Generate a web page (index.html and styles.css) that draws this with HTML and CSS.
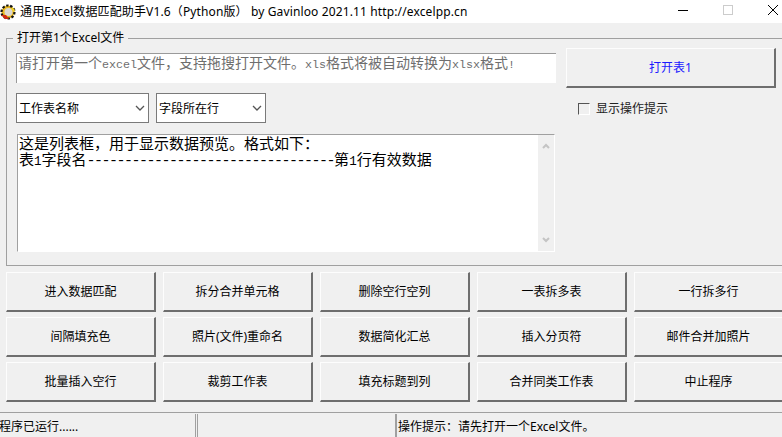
FILE: index.html
```html
<!DOCTYPE html>
<html lang="zh-CN">
<head>
<meta charset="utf-8">
<title>通用Excel数据匹配助手</title>
<link rel="stylesheet" href="styles.css">
</head>
<body>
<div class="window">
  <header class="titlebar">
    <svg class="app-icon" width="16" height="16" viewBox="0 0 16 16">
      <circle cx="8" cy="8" r="6.5" fill="#e8b820"/>
      <circle cx="8" cy="8" r="6.5" fill="none" stroke="#141414" stroke-width="2.2" stroke-dasharray="2.4 1.6"/>
      <circle cx="8.5" cy="8" r="4" fill="#dcd8d0"/>
      <path d="M1 11l4 4 4 0-3-4z" fill="#d02810"/>
      <path d="M12 3l3 3-1 2-3-3z" fill="#f0d020"/>
    </svg>
    <span class="title-text">通用Excel数据匹配助手V1.6（Python版） by Gavinloo 2021.11 http://excelpp.cn</span>
    <div class="win-controls">
      <svg width="12" height="12" viewBox="0 0 12 12"><path d="M1 6.5h10" stroke="#000"/></svg>
      <svg width="12" height="12" viewBox="0 0 12 12"><rect x="1.5" y="1.5" width="9" height="9" fill="none" stroke="#ccc"/></svg>
      <svg width="12" height="12" viewBox="0 0 12 12"><path d="M1 1l10 10M11 1L1 11" stroke="#000"/></svg>
    </div>
  </header>

  <fieldset class="group">
    <legend>打开第1个Excel文件</legend>
    <div class="group-grid">
      <div class="left-col">
        <div class="prompt">请打开第一个<span class="half">excel</span>文件，支持拖搜打开文件。<span class="half">xls</span>格式将被自动转换为<span class="half">xlsx</span>格式<span class="half">!</span></div>
        <div class="selects">
          <div class="combo combo-wide">工作表名称<svg class="chev" width="10" height="6" viewBox="0 0 10 6"><path d="M1 1l4 4 4-4" fill="none" stroke="#555" stroke-width="1.3"/></svg></div>
          <div class="combo combo-narrow">字段所在行<svg class="chev" width="10" height="6" viewBox="0 0 10 6"><path d="M1 1l4 4 4-4" fill="none" stroke="#555" stroke-width="1.3"/></svg></div>
        </div>
        <div class="listbox">
          <div class="list-text">
            <div class="list-line">这是列表框，用于显示数据预览。格式如下：</div>
            <div class="list-line">表<span class="half-l">1</span>字段名<span class="dash">---------------------------------</span>第<span class="half-l">1</span>行有效数据</div>
          </div>
          <div class="scroll">
            <svg width="8" height="6" viewBox="0 0 8 6"><path d="M1 5l3-3 3 3" fill="none" stroke="#c4c4c4" stroke-width="2"/></svg>
            <svg width="8" height="6" viewBox="0 0 8 6"><path d="M1 1l3 3 3-3" fill="none" stroke="#c4c4c4" stroke-width="2"/></svg>
          </div>
        </div>
      </div>
      <div class="right-col">
        <div class="btn btn-open">打开表1</div>
        <label class="check"><span class="box"></span>显示操作提示</label>
      </div>
    </div>
  </fieldset>

  <div class="buttons">
    <div class="btn">进入数据匹配</div>
    <div class="btn">拆分合并单元格</div>
    <div class="btn">删除空行空列</div>
    <div class="btn">一表拆多表</div>
    <div class="btn">一行拆多行</div>
    <div class="btn">间隔填充色</div>
    <div class="btn">照片(文件)重命名</div>
    <div class="btn">数据简化汇总</div>
    <div class="btn">插入分页符</div>
    <div class="btn">邮件合并加照片</div>
    <div class="btn">批量插入空行</div>
    <div class="btn">裁剪工作表</div>
    <div class="btn">填充标题到列</div>
    <div class="btn">合并同类工作表</div>
    <div class="btn">中止程序</div>
  </div>

  <footer class="status">
    <div class="cell cell-a"><span class="clip">程序已运行......</span></div>
    <div class="cell cell-b"></div>
    <div class="cell cell-c">操作提示：请先打开一个Excel文件。</div>
  </footer>
</div>
</body>
</html>
```
FILE: styles.css
```css
* { box-sizing: border-box; }
html, body { margin: 0; height: 100%; overflow: hidden; }
body { background: #f0f0f0; font: 12px/16px "Noto Sans", "Noto Sans CJK SC", sans-serif; color: #000; }
.window { width: 782px; height: 437px; overflow: hidden; display: flex; flex-direction: column; }

.titlebar { height: 23px; flex: none; background: #fff; display: flex; align-items: center; white-space: pre; }
.app-icon { flex: none; margin-right: 4px; }
.title-text { flex: 1; font-size: 12px; letter-spacing: 0.13px; }
.win-controls { display: flex; gap: 33px; margin-right: 3px; padding-bottom: 3px; }

.group { margin: 7px -10px 0 6px; padding: 0 0 0 9px; height: 236px; flex: none; border: 0; border-top: 1px solid #a0a0a0; border-left: 1px solid #a0a0a0; border-bottom: 1px solid #a0a0a0; min-width: 0; }
.group legend { padding: 0 4px; margin-left: -3px; line-height: 16px; }
.group-grid { display: flex; margin-top: 7px; }
.left-col { width: 540px; flex: none; display: flex; flex-direction: column; }
.right-col { margin-left: 10px; width: 210px; flex: none; margin-top: -5px; }

.prompt { height: 30px; background: #fff; border-top: 1px solid #9a9a9a; border-left: 1px solid #9a9a9a; padding: 0 0 0 1px; font: 14px/17px "Noto Sans CJK SC", sans-serif; color: #6e6e6e; white-space: pre; overflow: hidden; }
.half { font: 11.67px/1 "Liberation Mono", monospace; }
.selects { display: flex; gap: 7px; margin-top: 10px; }
.combo { height: 30px; background: #fff; border: 1px solid #7a7a7a; padding-left: 2px; display: flex; align-items: center; justify-content: space-between; padding-right: 3px; font: 12px/16px "Noto Sans CJK SC", sans-serif; }
.combo-wide { width: 133px; }
.combo-narrow { width: 110px; }
.listbox { margin: 11px 0 0 1px; height: 118px; width: 538px; display: flex; background: #fff; border-top: 1px solid #a0a0a0; border-left: 1px solid #a0a0a0; border-right: 1px solid #fff; border-bottom: 1px solid #fff; }
.list-text { flex: 1; padding-left: 1px; font: 15px/16px "Noto Sans CJK SC", sans-serif; }
.list-line { white-space: pre; height: 16px; }
.half-l { font: 12.5px/1 "Liberation Mono", monospace; }
.dash { font: 15px/1 "Liberation Mono", monospace; letter-spacing: -1.5px; }
.scroll { width: 16px; background: #f0f0f0; display: flex; flex-direction: column; justify-content: space-between; align-items: center; padding: 8px 0; }

.btn { height: 40px; display: flex; align-items: center; justify-content: center; background: #f0f0f0; border-style: solid; border-width: 1px 2px 2px 1px; border-color: #fdfdfd #6e6e6e #6e6e6e #fdfdfd; }
.btn-open { height: 40px; color: #1a1aff; }
.check { display: flex; align-items: center; margin: 13px 0 0 12px; color: #222; }
.box { width: 12px; height: 12px; background: #f0f0f0; border: 1px solid; border-color: #555 #fff #fff #555; margin-right: 6px; }

.buttons { display: grid; grid-template-columns: repeat(5, 150px); column-gap: 7px; row-gap: 5px; margin: 6px 0 0 6px; flex: none; }

.status { margin-top: 10px; flex: 1; display: flex; border-top: 1px solid #a0a0a0; padding-top: 1px; }
.cell { height: 24px; padding-top: 3px; line-height: 20px; white-space: pre; }
.cell-a { width: 196px; border-right: 1px solid #a0a0a0; overflow: hidden; }
.clip { margin-left: -1px; }
.cell-b { width: 199px; margin-left: 1px; border-right: 1px solid #a0a0a0; border-left: 1px solid #a0a0a0; }
.cell-c { flex: 1; border-left: 1px solid #a0a0a0; padding-left: 1px; }
```
